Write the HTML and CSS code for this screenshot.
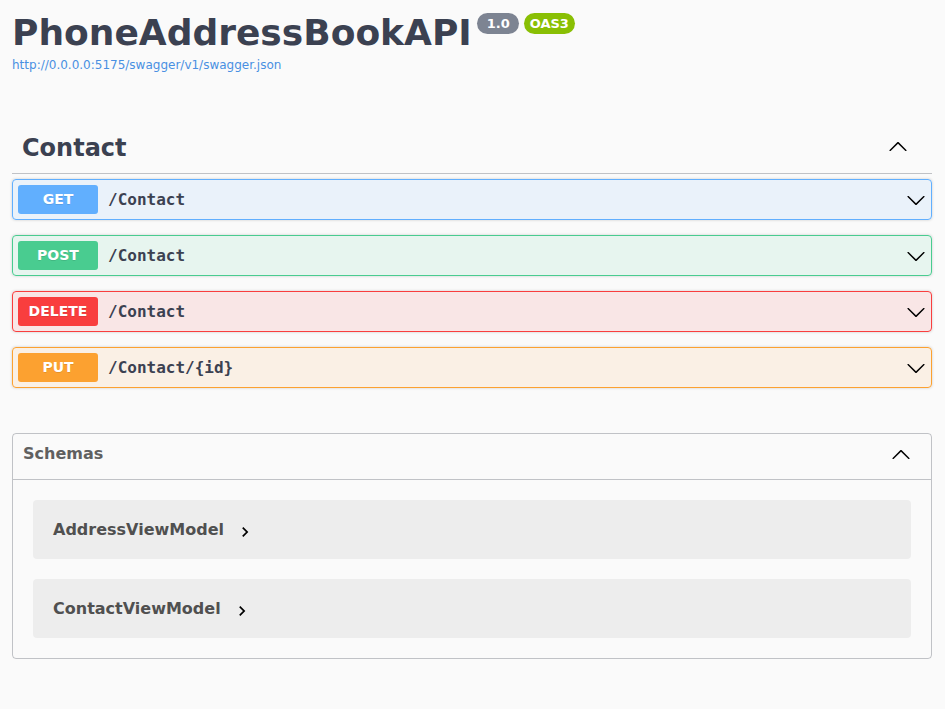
FILE: index.html
```html
<!DOCTYPE html>
<html lang="en">
<head>
<meta charset="utf-8">
<title>Swagger UI</title>
<link rel="stylesheet" href="styles.css">
</head>
<body>
<div class="wrapper">
  <header class="info">
    <div class="title-row">
      <h2 class="title">PhoneAddressBookAPI</h2>
      <span class="badge badge-version">1.0</span>
      <span class="badge badge-oas">OAS3</span>
    </div>
    <a class="spec-link" href="#">http://0.0.0.0:5175/swagger/v1/swagger.json</a>
  </header>

  <section class="tag-section">
    <div class="tag-header">
      <h3 class="tag-name">Contact</h3>
      <svg class="arrow tag-arrow" width="20" height="20" viewBox="0 0 20 20" aria-hidden="true"><path d="M17.418 14.908c.272.268.709.268.979 0 .27-.268.27-.701 0-.969l-7.908-7.83c-.27-.268-.707-.268-.979 0l-7.908 7.83c-.27.268-.27.701 0 .969.271.268.709.268.979 0L10 7.767l7.418 7.141z"/></svg>
    </div>

    <div class="opblock opblock-get">
      <div class="opblock-summary">
        <span class="method">GET</span>
        <span class="path">/Contact</span>
        <svg class="arrow" width="20" height="20" viewBox="0 0 20 20" aria-hidden="true"><path d="M17.418 6.109c.272-.268.709-.268.979 0s.271.701 0 .969l-7.908 7.83c-.27.268-.707.268-.979 0l-7.908-7.83c-.27-.268-.27-.701 0-.969.271-.268.709-.268.979 0L10 13.25l7.418-7.141z"/></svg>
      </div>
    </div>

    <div class="opblock opblock-post">
      <div class="opblock-summary">
        <span class="method">POST</span>
        <span class="path">/Contact</span>
        <svg class="arrow" width="20" height="20" viewBox="0 0 20 20" aria-hidden="true"><path d="M17.418 6.109c.272-.268.709-.268.979 0s.271.701 0 .969l-7.908 7.83c-.27.268-.707.268-.979 0l-7.908-7.83c-.27-.268-.27-.701 0-.969.271-.268.709-.268.979 0L10 13.25l7.418-7.141z"/></svg>
      </div>
    </div>

    <div class="opblock opblock-delete">
      <div class="opblock-summary">
        <span class="method">DELETE</span>
        <span class="path">/Contact</span>
        <svg class="arrow" width="20" height="20" viewBox="0 0 20 20" aria-hidden="true"><path d="M17.418 6.109c.272-.268.709-.268.979 0s.271.701 0 .969l-7.908 7.83c-.27.268-.707.268-.979 0l-7.908-7.83c-.27-.268-.27-.701 0-.969.271-.268.709-.268.979 0L10 13.25l7.418-7.141z"/></svg>
      </div>
    </div>

    <div class="opblock opblock-put">
      <div class="opblock-summary">
        <span class="method">PUT</span>
        <span class="path">/Contact/{id}</span>
        <svg class="arrow" width="20" height="20" viewBox="0 0 20 20" aria-hidden="true"><path d="M17.418 6.109c.272-.268.709-.268.979 0s.271.701 0 .969l-7.908 7.83c-.27.268-.707.268-.979 0l-7.908-7.83c-.27-.268-.27-.701 0-.969.271-.268.709-.268.979 0L10 13.25l7.418-7.141z"/></svg>
      </div>
    </div>
  </section>

  <section class="models">
    <h4 class="models-header">
      <span>Schemas</span>
      <svg class="arrow" width="20" height="20" viewBox="0 0 20 20" aria-hidden="true"><path d="M17.418 14.908c.272.268.709.268.979 0 .27-.268.27-.701 0-.969l-7.908-7.83c-.27-.268-.707-.268-.979 0l-7.908 7.830c-.27.268-.27.701 0 .969.271.268.709.268.979 0L10 7.767l7.418 7.141z"/></svg>
    </h4>
    <div class="models-body">
      <div class="model-container">
        <span class="model-title">AddressViewModel</span>
        <svg class="model-toggle" width="20" height="20" viewBox="0 0 24 24" aria-hidden="true"><path d="M10 6L8.59 7.41 13.17 12l-4.58 4.59L10 18l6-6z"/></svg>
      </div>
      <div class="model-container">
        <span class="model-title">ContactViewModel</span>
        <svg class="model-toggle" width="20" height="20" viewBox="0 0 24 24" aria-hidden="true"><path d="M10 6L8.59 7.41 13.17 12l-4.58 4.59L10 18l6-6z"/></svg>
      </div>
    </div>
  </section>
</div>
</body>
</html>
```

FILE: styles.css
```css
html, body {
  margin: 0;
  padding: 0;
  background: #fafafa;
}

body {
  font-family: "DejaVu Sans", sans-serif;
  color: #3b4151;
}

.wrapper {
  padding: 12px 13px 0 12px;
}

/* ---------- info ---------- */
.title-row {
  display: flex;
  align-items: flex-start;
}

.title {
  margin: 0;
  font-size: 36px;
  font-weight: 700;
  line-height: 42px;
  color: #3b4151;
}

.badge {
  margin-top: 1px;
  margin-left: 5px;
  height: 21px;
  line-height: 21px;
  border-radius: 57px;
  color: #fff;
  font-size: 13px;
  font-weight: 700;
  white-space: nowrap;
}

.badge-version {
  background: #7d8492;
  padding: 0 9px 0 10px;
  margin-left: 5px;
}

.badge-oas {
  background: #89bf04;
  padding: 0 6px;
}

.spec-link {
  display: block;
  margin-top: 4px;
  font-size: 12px;
  line-height: 14px;
  color: #4990e2;
  text-decoration: none;
}

/* ---------- tag section ---------- */
.tag-section {
  margin-top: 52px;
}

.tag-header {
  display: flex;
  align-items: flex-start;
  justify-content: space-between;
  padding: 10px 24px 11px 10px;
  border-bottom: 1px solid rgba(59, 65, 81, 0.3);
  margin-bottom: 5px;
}

.tag-name {
  margin: 0;
  font-size: 24px;
  font-weight: 700;
  line-height: 28px;
  color: #3b4151;
}

.tag-arrow {
  margin-top: 2px;
}

.arrow {
  fill: #000;
  flex: none;
}

/* ---------- operations ---------- */
.opblock {
  border: 1px solid;
  border-radius: 4px;
  margin-bottom: 15px;
  box-shadow: 0 0 3px rgba(0, 0, 0, 0.19);
}

.opblock-summary {
  display: flex;
  align-items: center;
  padding: 5px;
}

.method {
  min-width: 80px;
  padding: 6px 0;
  line-height: 17px;
  border-radius: 3px;
  text-align: center;
  font-size: 14px;
  font-weight: 700;
  color: #fff;
  text-shadow: 0 1px 0 rgba(0, 0, 0, 0.1);
}

.path {
  flex: 1;
  padding: 0 10px;
  font-family: "DejaVu Sans Mono", monospace;
  font-size: 16px;
  font-weight: 700;
  color: #3b4151;
}

.opblock-get { border-color: #61affe; background: rgba(97, 175, 254, 0.1); }
.opblock-get .method { background: #61affe; }

.opblock-post { border-color: #49cc90; background: rgba(73, 204, 144, 0.1); }
.opblock-post .method { background: #49cc90; }

.opblock-delete { border-color: #f93e3e; background: rgba(249, 62, 62, 0.1); }
.opblock-delete .method { background: #f93e3e; }

.opblock-put { border-color: #fca130; background: rgba(252, 161, 48, 0.1); }
.opblock-put .method { background: #fca130; }

/* ---------- models ---------- */
.models {
  margin-top: 45px;
  border: 1px solid rgba(59, 65, 81, 0.3);
  border-radius: 4px;
}

.models-header {
  box-sizing: border-box;
  height: 46px;
  margin: 0;
  display: flex;
  align-items: center;
  justify-content: space-between;
  padding: 0 20px 6px 10px;
  border-bottom: 1px solid rgba(59, 65, 81, 0.3);
  font-size: 16px;
  font-weight: 700;
  color: #606060;
}

.models-body {
  padding: 20px 20px 0;
}

.model-container {
  height: 59px;
  display: flex;
  align-items: center;
  padding: 0 20px;
  margin-bottom: 20px;
  border-radius: 4px;
  background: rgba(0, 0, 0, 0.05);
}

.model-title {
  font-size: 16px;
  font-weight: 700;
  color: #505050;
}

.model-toggle {
  margin-left: 11px;
  margin-top: 4px;
  fill: #000;
}
```
